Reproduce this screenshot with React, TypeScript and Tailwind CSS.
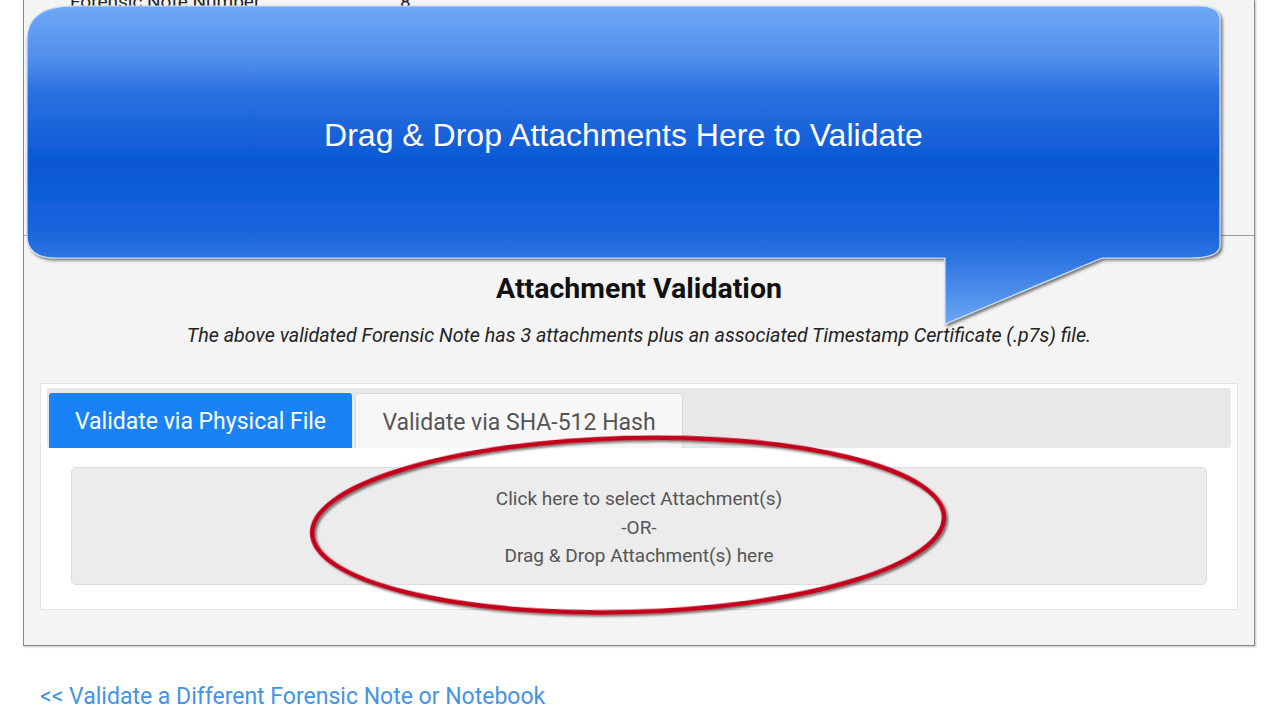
import React from "react";

const font = { fontFamily: "Roboto, 'Liberation Sans', sans-serif" };

function Callout() {
  return (
    <div className="pointer-events-none absolute left-0 top-0 h-[340px] w-[1280px]">
      <svg width="1280" height="340" className="absolute left-0 top-0">
        <defs>
          <linearGradient id="cg" x1="0" y1="6" x2="0" y2="324" gradientUnits="userSpaceOnUse">
            <stop offset="0" stopColor="#6fa8f6" />
            <stop offset="0.17" stopColor="#4f8eec" />
            <stop offset="0.27" stopColor="#2a71df" />
            <stop offset="0.5" stopColor="#0a57d6" />
            <stop offset="0.7" stopColor="#1764dc" />
            <stop offset="0.79" stopColor="#2c74e1" />
            <stop offset="1" stopColor="#6ba6f4" />
          </linearGradient>
          <filter id="cs" x="-5%" y="-5%" width="110%" height="120%">
            <feDropShadow dx="2" dy="2" stdDeviation="1.4" floodColor="#3a3a3a" floodOpacity="0.7" />
          </filter>
        </defs>
        <path
          d="M 27 40 C 27 15 45 6 74 6 L 1198 6 C 1212 6 1220 11 1220 20 L 1220 245 C 1220 254 1210 258 1190 258 L 1102 258 L 945 324 L 945 258 L 56 258 C 38 258 27 251 27 236 Z"
          fill="url(#cg)"
          stroke="#cfe0f9"
          strokeWidth="1.2"
          filter="url(#cs)"
        />
      </svg>
      <div
        className="absolute left-[27px] top-[6px] flex h-[252px] w-[1193px] items-center justify-center pt-[6px] text-[32px] text-white"
        style={{ fontFamily: "'Liberation Sans', Arial, sans-serif" }}
      >
        Drag &amp; Drop Attachments Here to Validate
      </div>
    </div>
  );
}

function Highlight() {
  return (
    <svg width="1280" height="720" className="pointer-events-none absolute left-0 top-0">
      <defs>
        <filter id="es" x="-5%" y="-10%" width="110%" height="120%">
          <feDropShadow dx="2" dy="2" stdDeviation="1.2" floodColor="#222" floodOpacity="0.6" />
        </filter>
      </defs>
      <ellipse
        cx="628"
        cy="525"
        rx="316"
        ry="87"
        transform="rotate(-1.5 628 525)"
        fill="none"
        stroke="#c4001c"
        strokeWidth="4.5"
        filter="url(#es)"
      />
    </svg>
  );
}

export default function App() {
  return (
    <div className="relative h-[720px] w-[1280px] overflow-hidden bg-white text-[#333]" style={font}>
      <div className="ml-[23px] w-[1232px] border border-t-0 border-[#8a8a8a] bg-[#f4f4f4] shadow-[1px_1px_2px_rgba(0,0,0,0.25)]">
        <div className="flow-root h-[236px] border-b border-[#9a9a9a]">
          <div className="-mt-[12px] flex text-[19px] text-[#222]">
            <span className="ml-[46px] w-[330px]">Forensic Note Number:</span>
            <span>8</span>
          </div>
        </div>

        <h2 className="mt-[36px] text-center text-[28.5px] font-bold leading-[34px] text-[#111]">
          Attachment Validation
        </h2>
        <p className="mt-[17px] text-center text-[19.7px] italic leading-[26px] text-[#222]">
          The above validated Forensic Note has 3 attachments plus an associated Timestamp Certificate (.p7s) file.
        </p>

        <div className="mx-[16px] mt-[34px] border border-[#e4e4e4] bg-white pb-[24px] pt-[4px]">
          <div className="mx-[6px] flex h-[60px] gap-[3px] rounded-[3px] bg-[#e8e8e8] px-[2px] pt-[5px]">
            <div className="flex w-[303px] items-center justify-center rounded-t-[3px] bg-[#1a82f7] pt-[4px] text-[23px] text-white">
              Validate via Physical File
            </div>
            <div className="flex w-[328px] items-center justify-center rounded-t-[3px] border border-b-0 border-[#dcdcdc] bg-[#f7f7f7] pt-[4px] text-[23px] text-[#555]">
              Validate via SHA-512 Hash
            </div>
          </div>
          <div className="mx-[30px] mt-[19px] flex h-[118px] flex-col items-center justify-center rounded-[5px] border border-[#dddddd] bg-[#ececec] pt-[4px] text-[19px] leading-[28.5px] text-[#555]">
            <span>Click here to select Attachment(s)</span>
            <span>-OR-</span>
            <span>Drag &amp; Drop Attachment(s) here</span>
          </div>
        </div>
        <div className="h-[35px]" />
      </div>

      <a className="ml-[40px] mt-[37px] block text-[23px] leading-[28px] text-[#4593e6]">
        &lt;&lt; Validate a Different Forensic Note or Notebook
      </a>

      <Highlight />
      <Callout />
    </div>
  );
}
